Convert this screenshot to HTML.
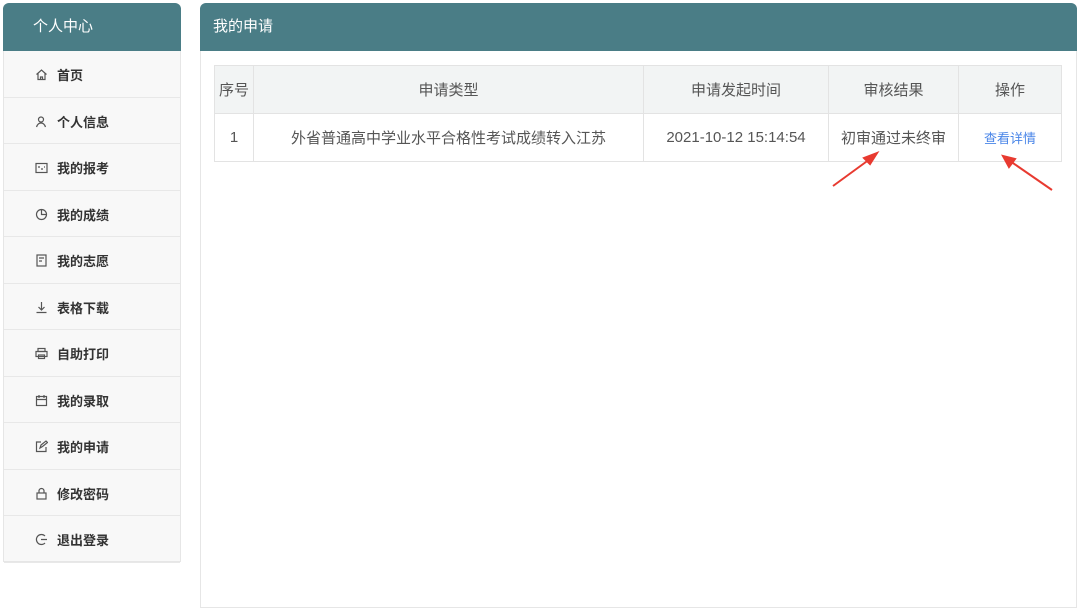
<!DOCTYPE html>
<html><head><meta charset="utf-8"><style>
*{box-sizing:border-box;margin:0;padding:0}
body{width:1080px;height:611px;background:#fff;font-family:"Liberation Sans","Noto Sans CJK SC",sans-serif;position:relative;overflow:hidden}
.side{position:absolute;left:3px;top:3px;width:178px;height:559px;border:1px solid #e6e6e6;border-radius:6px 6px 0 0;background:#f8f8f8}
.sh{height:48px;background:#4a7d86;color:#fff;font-size:15px;line-height:48px;padding-left:30px;border-radius:6px 6px 0 0;margin:-1px -1px 0}
.it{height:46.5px;border-bottom:1px solid #e8e8e8;font-size:13px;font-weight:bold;color:#333;padding-left:31px;display:flex;align-items:center;padding-top:2px}
.it svg{width:13px;height:13px;margin-right:9px;stroke:#555;fill:none;stroke-width:1.2}
.main{position:absolute;left:200px;top:3px;width:877px;height:605px;border:1px solid #e6e6e6;border-radius:6px 6px 0 0}
.mh{height:48px;background:#4a7d86;color:#fff;font-size:15px;line-height:48px;padding-left:13px;border-radius:6px 6px 0 0;margin:-1px -1px 0}
table{position:absolute;left:13px;top:61px;border-collapse:collapse;font-size:15px;color:#555}
td{border:1px solid #e3e3e3;text-align:center;height:48px}
tr.h td{background:#f2f4f4}
</style></head><body>
<div class="side"><div class="sh">个人中心</div>
<div class="it"><svg viewBox="0 0 13 13"><path d="M1.5 6.5L6.5 2l5 4.5M3 5.5V11.5h7V5.5M5.5 11.5V9h2v2.5"/></svg>首页</div>
<div class="it"><svg viewBox="0 0 13 13"><circle cx="6" cy="4.5" r="2.5"/><path d="M1.5 12c1-3 2.5-4 4.5-4s3.5 1 4.5 4"/></svg>个人信息</div>
<div class="it"><svg viewBox="0 0 13 13"><rect x="1" y="2.5" width="11" height="9"/><path d="M3 6h2M6 8h2M9 6h1"/></svg>我的报考</div>
<div class="it"><svg viewBox="0 0 13 13"><circle cx="6.5" cy="6.5" r="5"/><path d="M6.5 1.5v5h5"/></svg>我的成绩</div>
<div class="it"><svg viewBox="0 0 13 13"><rect x="2" y="1" width="9" height="11"/><path d="M4 4h5M4 7h3"/></svg>我的志愿</div>
<div class="it"><svg viewBox="0 0 13 13"><path d="M6.5 1v8M3.5 6l3 3 3-3M1.5 11.5h10"/></svg>表格下载</div>
<div class="it"><svg viewBox="0 0 13 13"><rect x="3" y="1.5" width="7" height="3"/><rect x="1" y="4.5" width="11" height="5"/><rect x="3.5" y="8" width="6" height="3.5"/></svg>自助打印</div>
<div class="it"><svg viewBox="0 0 13 13"><rect x="1.5" y="2.5" width="10" height="9"/><path d="M1.5 5.5h10M4 1v3M9 1v3"/></svg>我的录取</div>
<div class="it"><svg viewBox="0 0 13 13"><path d="M11 7v4.5H1.5V2H6M5 8l1-3 5-4 1.5 1.5-5 4z"/></svg>我的申请</div>
<div class="it"><svg viewBox="0 0 13 13"><rect x="2" y="6" width="9" height="6"/><path d="M4 6V4a2.5 2.5 0 0 1 5 0v2"/></svg>修改密码</div>
<div class="it"><svg viewBox="0 0 13 13"><path d="M10 3a5 5 0 1 0 0 7M6 6.5h6"/></svg>退出登录</div>
</div>
<div class="main"><div class="mh">我的申请</div>
<table>
<tr class="h"><td style="width:39px">序号</td><td style="width:390px">申请类型</td><td style="width:185px">申请发起时间</td><td style="width:130px">审核结果</td><td style="width:103px">操作</td></tr>
<tr><td>1</td><td>外省普通高中学业水平合格性考试成绩转入江苏</td><td>2021-10-12 15:14:54</td><td>初审通过未终审</td><td style="color:#4a86e8;font-size:13px">查看详情</td></tr>
</table></div>
<svg style="position:absolute;left:0;top:0" width="1080" height="611">
<g stroke="#e83a30" stroke-width="2" fill="#e83a30">
<line x1="833" y1="186" x2="870" y2="159"/><polygon points="877,153 864,158 870,164"/>
<line x1="1052" y1="190" x2="1010" y2="161"/><polygon points="1003,156 1009,167 1015,159"/>
</g></svg>
</body></html>
